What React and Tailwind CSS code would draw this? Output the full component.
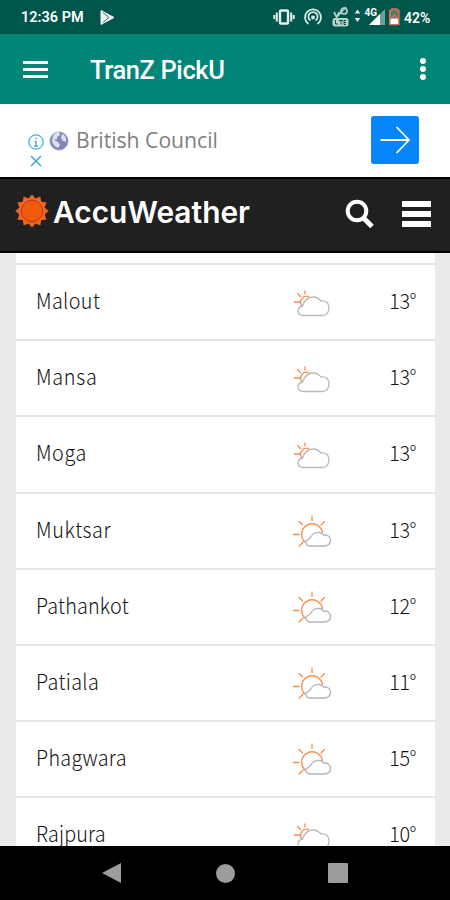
import React from "react";

const cities = [
  { name: "Malout", temp: "13°", icon: "cloudy", spacing: "tracking-[0.4px]" },
  { name: "Mansa", temp: "13°", icon: "cloudy", spacing: "tracking-[0.8px]" },
  { name: "Moga", temp: "13°", icon: "cloudy", spacing: "tracking-[0.6px]" },
  { name: "Muktsar", temp: "13°", icon: "sunny", spacing: "tracking-[0.7px]" },
  { name: "Pathankot", temp: "12°", icon: "sunny", spacing: "tracking-[0.2px]" },
  { name: "Patiala", temp: "11°", icon: "sunny", spacing: "tracking-[0.4px]" },
  { name: "Phagwara", temp: "15°", icon: "sunny", spacing: "tracking-[0.3px]" },
  { name: "Rajpura", temp: "10°", icon: "cloudy", spacing: "tracking-[0.1px]" },
];

const MostlyCloudy = () => (
  <svg className="mt-[3px] w-10 h-9" viewBox="-1 0 40 36" fill="none" strokeLinecap="round">
    <g stroke="#f98b4d" strokeWidth="1.3">
      <path d="M12 5V8M4.500 7.500l3 3M1.500 16h5.500M9 20A6 6 0 0 1 15.500 10.500" />
    </g>
    <path
      d="M11 29.500C3.500 29.500 3 21.500 9.500 20C11.500 14.500 14 11 20 11C24 11 26 12.500 28 15C33.500 14.500 36 17.500 36 21.500C36 26.500 33.500 29.500 29 29.500Z"
      stroke="#b9b9b9"
      strokeWidth="1.3"
    />
  </svg>
);

const PartlySunny = () => (
  <svg className="mt-[2px] w-10 h-9" viewBox="0 0 40 36" fill="none" strokeLinecap="round">
    <g stroke="#f98b4d" strokeWidth="1.3">
      <path d="M20 2v4.500M7 7.500l3.500 3.200M32.500 7.500L29 11M1.500 20.500h5.500M7 32l4-3.700M13 28A10.500 10.500 0 1 1 30.500 18.500" />
    </g>
    <path
      d="M18 32C14 32 13 28 14.500 26.500C17 26 18 24.500 19.500 22C21.500 19 24 18 27.500 18.500Q30 19 31.500 21C36 20.800 38.500 23 38.500 26C38.500 30 36 32 32 32Z"
      stroke="#b5b5ba"
      strokeWidth="1.3"
    />
  </svg>
);

const StatusIcons = () => (
  <svg className="w-[132px] h-[34px]" viewBox="272 0 132 34" fill="none">
    {/* vibrate */}
    <rect x="280" y="10.500" width="8" height="13" rx="1" stroke="#e4f0ee" strokeWidth="2.400" />
    <path d="M276.800 12.500v9M274.300 15v4M291.200 12.500v9M293.700 15v4" stroke="#e4f0ee" strokeWidth="2" />
    {/* hotspot */}
    <path d="M308.500 24A8 8 0 1 1 317.500 24M310.500 20.500A4.600 4.600 0 1 1 315.500 20.500" stroke="#d8e9e6" strokeWidth="1.700" />
    <circle cx="313" cy="17.500" r="1.900" fill="#d8e9e6" />
    {/* VoLTE */}
    <path d="M334 12l2.500 5 3-5" stroke="#b9d3cf" strokeWidth="1.700" />
    <circle cx="344" cy="11" r="3" stroke="#b9d3cf" strokeWidth="1.700" />
    <path d="M337 17l9-10" stroke="#b9d3cf" strokeWidth="1.300" />
    <rect x="332.500" y="18" width="16" height="8.500" rx="2.500" fill="#b9d3cf" />
    <path d="M335.500 20v4h2.500M339 20.500h4M341 20.500v4M346 20.500h-2v4h2M344 22.500h2" stroke="#00564a" />
    {/* data arrows */}
    <path d="M354.800 13.500l2.700-4 2.700 4zM354.800 18l2.700 4 2.700-4z" fill="#e4f0ee" />
    {/* signal */}
    <path d="M369 25L385 9V25Z" fill="#6d9f96" />
    <path d="M369 25L380 14V25Z" fill="#fff" />
    <text x="364.500" y="16" fill="#fff" fontSize="10" fontWeight="700" fontFamily="Roboto, sans-serif">4G</text>
    {/* battery */}
    <path d="M389.800 10.500h2v-1.500h5v1.500h2v14h-9z" stroke="#d9705a" strokeWidth="1.600" fill="#56766a" />
    <rect x="390.500" y="18.500" width="7.600" height="5.500" fill="#fff" />
    <path d="M391 18.500l3.300-3.500 3.300 3.500" stroke="#d9705a" strokeWidth="1.300" />
  </svg>
);

const StatusBar = () => (
  <div className="flex h-[34px] shrink-0 items-center bg-[#00564a] pl-[21px] text-white">
    <span className="mt-[2px] w-[77px] whitespace-nowrap font-[Roboto,sans-serif] text-[14.500px] font-semibold">12:36 PM</span>
    <svg className="w-5 h-5" viewBox="0 0 20 20" fill="none">
      <path d="M3 3.500L16 10.500 3 17.500Z" fill="#e9f2f1" stroke="#e9f2f1" strokeLinejoin="round" />
      <path d="M5 5.500l6 5-6 5" stroke="#456f68" strokeWidth="1" />
    </svg>
    <div className="ml-[154px]">
      <StatusIcons />
    </div>
    <span className="mt-[2px] font-[Roboto,sans-serif] text-[14px] font-semibold">42%</span>
  </div>
);

const AppBar = () => (
  <div className="flex h-[70px] shrink-0 items-center bg-[#008577] pl-[23px] pr-6 text-white">
    <div className="flex w-[67px] flex-col gap-[4px]">
      <span className="h-[3px] w-[25px] bg-white"></span>
      <span className="h-[3px] w-[25px] bg-white"></span>
      <span className="h-[3px] w-[25px] bg-white"></span>
    </div>
    <h1 className="mt-[2px] font-[Roboto,sans-serif] text-[25.500px] font-medium tracking-[-0.400px]">TranZ PickU</h1>
    <div className="ml-auto flex flex-col gap-[2px]">
      <span className="size-[6px] rounded-full bg-white"></span>
      <span className="size-[6px] rounded-full bg-white"></span>
      <span className="size-[6px] rounded-full bg-white"></span>
    </div>
  </div>
);

const AdBanner = () => (
  <div className="flex h-[73px] shrink-0 items-center bg-white pl-7 pr-[31px]">
    <svg className="mt-[13px] h-10 w-[42px]" viewBox="28 127 42 40" fill="none">
      <circle cx="36" cy="142" r="7.200" stroke="#48b6d5" strokeWidth="1.300" />
      <path d="M36 141v5M34.500 141.500h1.500M34 146h4M36 137.500v1.700" stroke="#48b6d5" strokeWidth="1.500" />
      <path d="M31 156l10 10M41 156l-10 10" stroke="#3ca9c9" strokeWidth="1.500" />
      <circle cx="59" cy="141" r="9" fill="#8586bd" stroke="#9697c6" />
      <path d="M53 136q2-4 6-4l1 3 -3 2v2l-3 1 4 2 2 3-2 3q-5-2-6-7zM62 134q5 2 4 8l-3-1-2-3z" fill="#d8e3ef" />
    </svg>
    <span className="ml-[6px] mt-[-1px] origin-left scale-x-[0.94] font-[Open_Sans,sans-serif] text-[22.500px] text-[#808080]">British Council</span>
    <div className="ml-auto mt-[-1px] flex size-12 items-center justify-center rounded-[3px] bg-[#0785fb]">
      <svg className="size-[34px]" viewBox="0 0 34 34" fill="none" stroke="#fff" strokeWidth="1.800">
        <path d="M2.500 17H31M18.500 4L31 17 18.500 30" />
      </svg>
    </div>
  </div>
);

const AccuHeader = () => (
  <div className="flex h-[76px] shrink-0 items-center border-t-2 border-b-2 border-black bg-[#202020] pl-[15px] pr-[19px]">
    <svg className="mt-[-8px] size-[34px]" viewBox="-17 -17 34 34">
      {[0, 30, 60, 90, 120, 150, 180, 210, 240, 270, 300, 330].map((deg) => (
        <path key={deg} d="M-4.500 -11L0 -16.800 4.500 -11Z" fill="#f26422" transform={`rotate(${deg})`} />
      ))}
      <circle r="13" fill="#f26422" />
      <circle r="10.700" fill="#f4590b" stroke="#a54419" strokeWidth="1" />
    </svg>
    <span className="ml-1 mt-[-6px] origin-left scale-x-[0.98] font-[Inter,sans-serif] text-[30.500px] font-semibold text-white">AccuWeather</span>
    <svg className="ml-auto mt-[-2px] size-8" viewBox="0 0 32 32" fill="none" stroke="#fff">
      <circle cx="13" cy="13" r="9.300" strokeWidth="4" />
      <path d="M19.500 20L28 28.500" strokeWidth="5" />
    </svg>
    <div className="ml-[26px] mt-[-2px] flex flex-col gap-1">
      <span className="h-[6px] w-[29px] bg-white"></span>
      <span className="h-[6px] w-[29px] bg-white"></span>
      <span className="h-[6px] w-[29px] bg-white"></span>
    </div>
  </div>
);

const CityRow = ({ city }) => (
  <div className="flex h-[76.200px] shrink-0 items-center border-t-[2px] border-[#e4e4e4] bg-white pl-5 pr-[19px] font-[Noto_Sans_CJK_SC,sans-serif] text-[21.500px] font-light text-[#111]">
    <span className={`w-[256px] -mt-1 origin-left scale-x-[0.92] ${city.spacing}`}>{city.name}</span>
    {city.icon === "cloudy" ? <MostlyCloudy /> : <PartlySunny />}
    <span className="ml-auto -mt-1 origin-right scale-x-[0.92] tracking-[-0.500px]">{city.temp}</span>
  </div>
);

const NavBar = () => (
  <div className="flex h-[54px] shrink-0 items-center bg-black pl-[102px]">
    <svg className="h-[22px] w-[20px]" viewBox="0 0 20 22">
      <path d="M0 11L19 1V21Z" fill="#9c9c9c" />
    </svg>
    <span className="ml-[94px] size-[19px] rounded-full bg-[#9c9c9c]"></span>
    <span className="ml-[93px] size-5 rounded-[1px] bg-[#9c9c9c]"></span>
  </div>
);

const App = () => {
  return (
    <div className="flex h-[900px] w-[450px] flex-col overflow-hidden bg-white">
      <StatusBar />
      <AppBar />
      <AdBanner />
      <AccuHeader />
      <div className="flex min-h-0 flex-1 flex-col overflow-hidden bg-[#ebebeb] pl-4 pr-[15px]">
        <div className="h-[10px] shrink-0 bg-white"></div>
        {cities.map((city) => (
          <CityRow key={city.name} city={city} />
        ))}
      </div>
      <NavBar />
    </div>
  );
};

export default App;
